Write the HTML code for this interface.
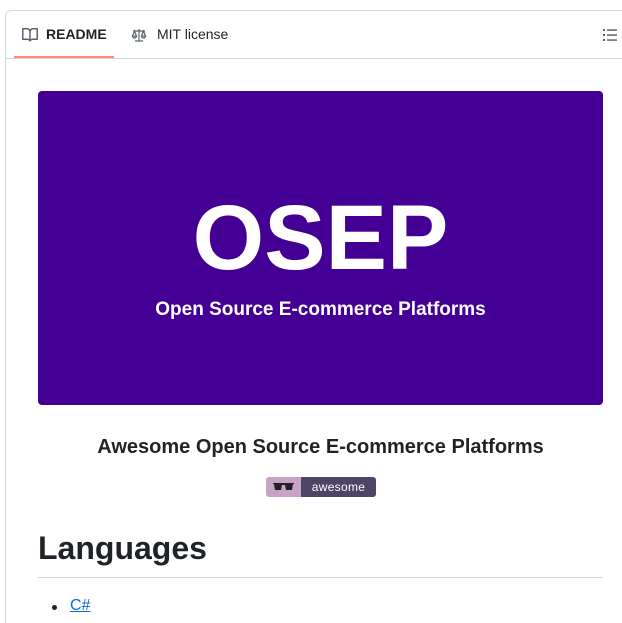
<!DOCTYPE html>
<html style="overflow:hidden;height:623px"><head><style>
body{margin:0;background:#fff;font-family:"Liberation Sans",sans-serif;color:#1f2328;width:622px;height:623px;overflow:hidden;position:relative}
.box{position:absolute;left:5px;top:10px;width:640px;height:613px;border:1px solid #d1d9e0;border-bottom:none;border-radius:6px 6px 0 0;box-sizing:border-box}
.hdr{position:absolute;left:5px;top:58px;width:617px;border-top:1px solid #d1d9e0}
.tab{position:absolute;top:26px;font-size:14px}
.ul{position:absolute;left:14px;top:56px;width:100px;height:2px;background:#fd8c73}
.banner{position:absolute;left:38px;top:91px;width:565px;height:314px;background:#440094;border-radius:4px;color:#fff;text-align:center}
</style></head><body>
<div class="box"></div>
<div class="hdr"></div>
<div class="ul"></div>
<svg style="position:absolute;left:22px;top:27px" width="16" height="16" viewBox="0 0 16 16"><path fill="#59636e" d="M0 1.75A.75.75 0 0 1 .75 1h4.253c1.227 0 2.317.59 3 1.501A3.743 3.743 0 0 1 11.006 1h4.245a.75.75 0 0 1 .75.75v10.5a.75.75 0 0 1-.75.75h-4.507a2.25 2.25 0 0 0-1.591.659l-.622.621a.75.75 0 0 1-1.06 0l-.622-.621A2.25 2.25 0 0 0 5.258 13H.75a.75.75 0 0 1-.75-.75Zm7.251 10.324.004-5.073-.002-2.253A2.25 2.25 0 0 0 5.003 2.5H1.5v9h3.757a3.75 3.75 0 0 1 1.994.574ZM8.755 4.75l-.004 7.322a3.752 3.752 0 0 1 1.992-.572H14.5v-9h-3.495a2.250 2.250 0 0 0-2.250 2.250Z"/></svg>
<div class="tab" style="left:46px;font-weight:bold">README</div>
<svg style="position:absolute;left:131px;top:27px" width="16" height="16" viewBox="0 0 16 16" fill="none" stroke="#59636e" stroke-width="1.2"><path d="M8 2v12M4 14h8M2 4h12M3.5 4l-2 5h4zM12.5 4l-2 5h4z"/><path d="M1.5 9a2 2 0 0 0 4 0M10.5 9a2 2 0 0 0 4 0"/></svg>
<div class="tab" style="left:157px;color:#1f2328">MIT license</div>
<svg style="position:absolute;left:602px;top:28px" width="16" height="14" viewBox="0 0 16 14"><g fill="#59636e"><rect x="1" y="1" width="2" height="2"/><rect x="1" y="6" width="2" height="2"/><rect x="1" y="11" width="2" height="2"/><rect x="5" y="1.3" width="10" height="1.5"/><rect x="5" y="6.3" width="10" height="1.5"/><rect x="5" y="11.3" width="10" height="1.5"/></g></svg>
<div class="banner">
<div style="position:absolute;left:0;right:0;top:92px;font-size:92px;font-weight:bold;line-height:110px">OSEP</div>
<div style="position:absolute;left:0;right:0;top:208px;font-size:19px;font-weight:bold">Open Source E-commerce Platforms</div>
</div>
<div style="position:absolute;left:0;width:641px;top:436px;text-align:center;font-size:20px;font-weight:bold">Awesome Open Source E-commerce Platforms</div>
<div style="position:absolute;left:266px;top:477px;width:110px;height:20px;border-radius:3px;overflow:hidden;display:flex">
<div style="width:35px;background:#c7a3c5;position:relative"><svg style="position:absolute;left:7px;top:5px" width="21" height="10" viewBox="0 0 21 10"><path d="M0 1h21v1h-1l-1 6h-6l-1-5h-3l-1 5h-6l-1-6h-1z" fill="#222"/></svg></div>
<div style="flex:1;background:#4d4466;color:#fff;font-size:12px;line-height:20px;text-align:center;letter-spacing:.3px">awesome</div>
</div>
<div style="position:absolute;left:38px;top:530px;font-size:32px;font-weight:bold">Languages</div>
<div style="position:absolute;left:38px;top:577px;width:565px;border-top:1px solid #d1d9e0"></div>
<div style="position:absolute;left:52px;top:605px;width:5px;height:5px;border-radius:50%;background:#1f2328"></div>
<div style="position:absolute;left:70px;top:597px;font-size:16px;line-height:18px;color:#0969da;text-decoration:underline">C#</div>
</body></html>
